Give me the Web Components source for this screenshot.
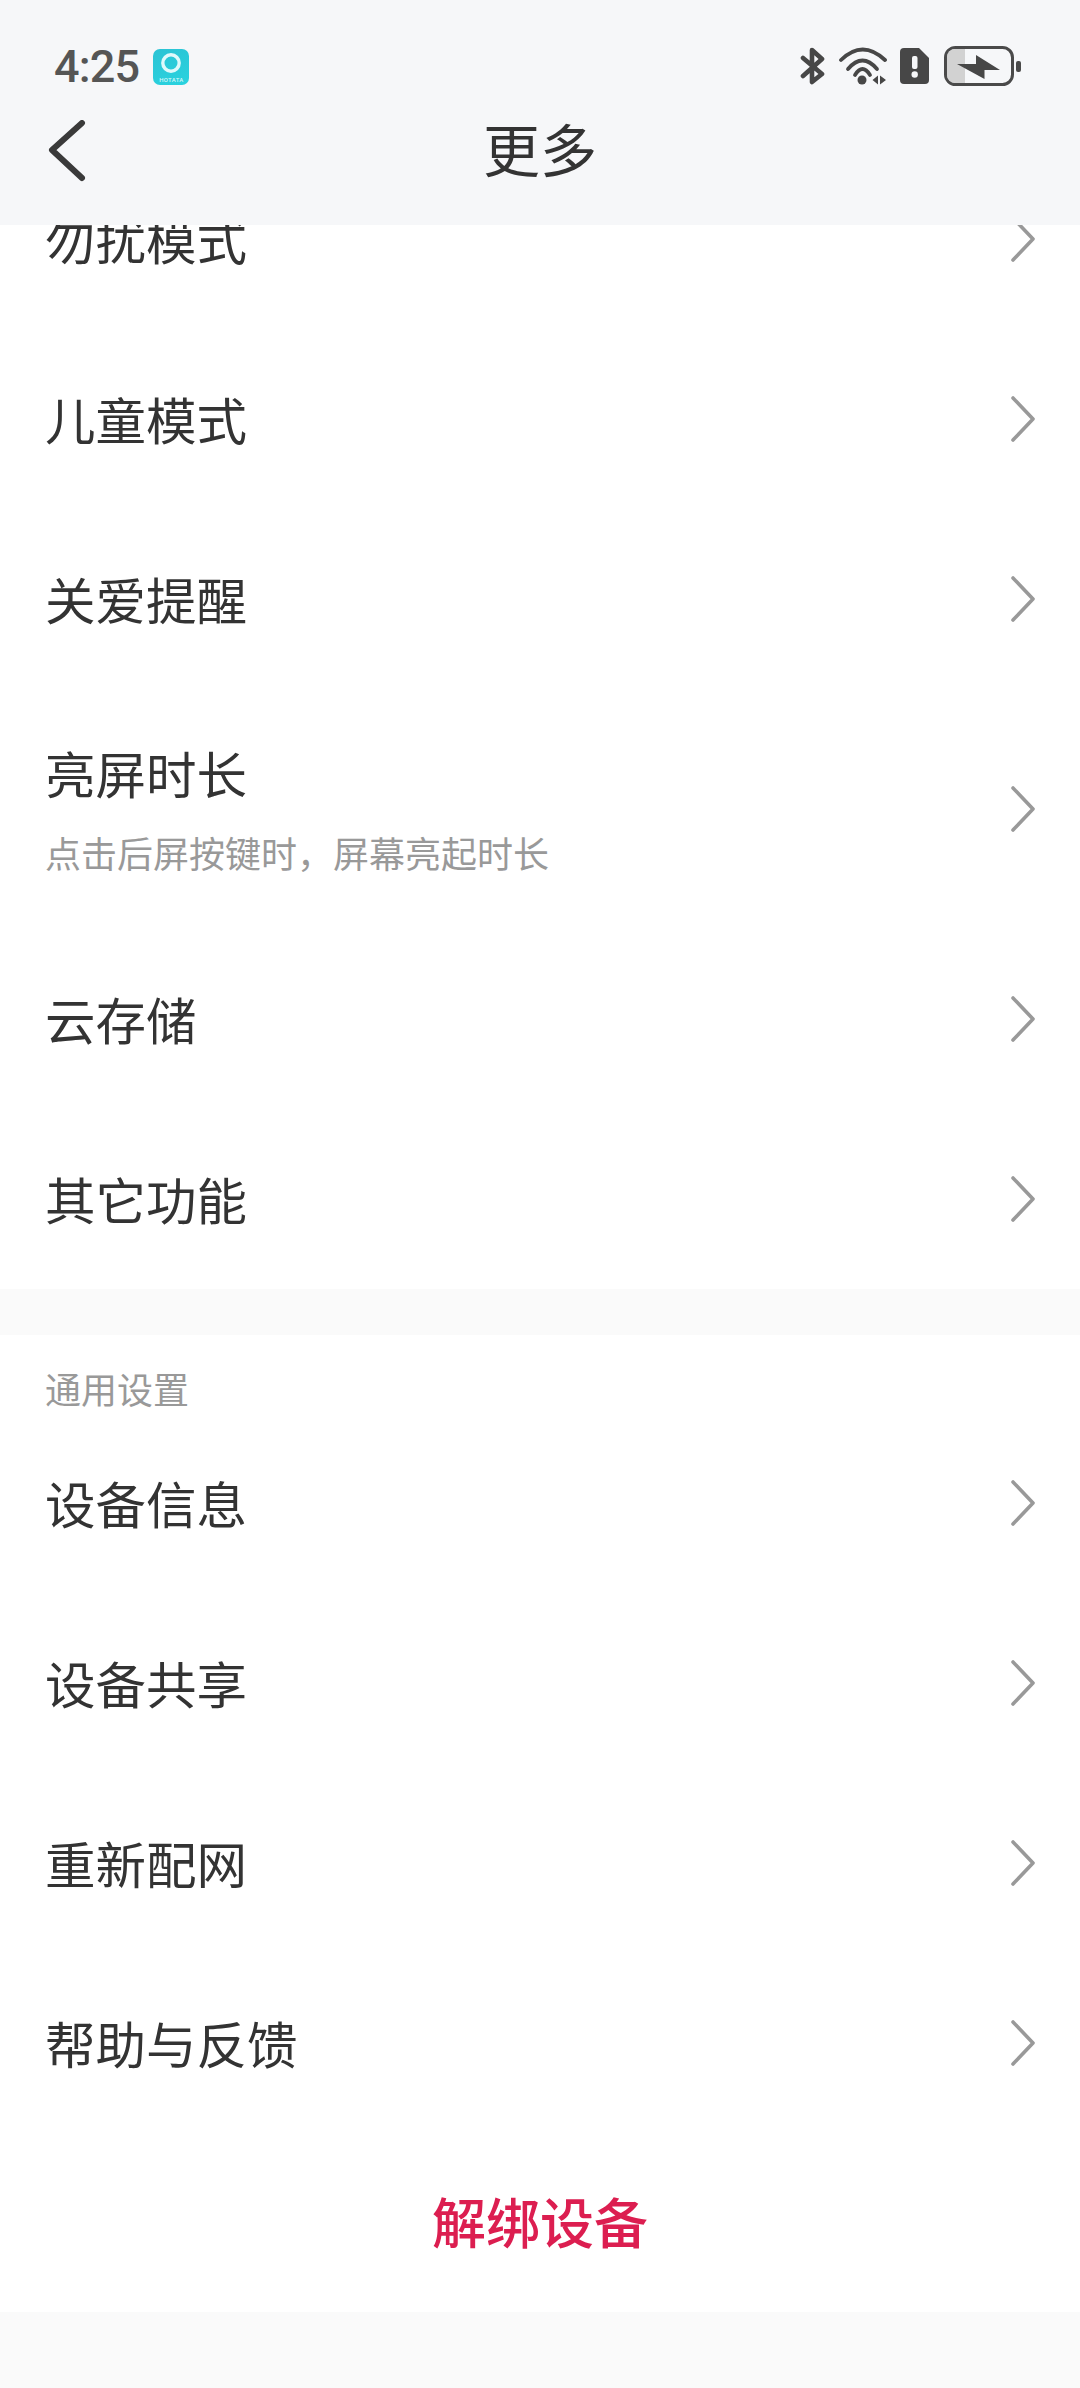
<!DOCTYPE html>
<html lang="zh-CN"><head><meta charset="utf-8"><title>更多</title>
<style>
html,body{margin:0;padding:0;background:#fafafa}
body{width:1080px;height:2388px;overflow:hidden;font-family:"Noto Sans CJK SC","Noto Sans",sans-serif;color:#333}
</style></head><body>
<more-page></more-page>
<template id="t-status">
<style>
:host{display:flex;align-items:center;justify-content:space-between;box-sizing:border-box;height:100px;padding:46px 59px 14px 54px;color:#4a4a4a}
.l,.r{display:flex;align-items:center;height:40px}
.time{font:500 45px/40px Roboto,sans-serif;color:#555;letter-spacing:-.8px;position:relative;top:1px}
.logo{box-sizing:border-box;width:36px;height:36px;margin-left:14px;border-radius:7px;background:linear-gradient(160deg,#2bc3d4,#2ad3df);display:flex;flex-direction:column;align-items:center;overflow:hidden;position:relative;top:1px}
.logo svg{margin-top:3px;flex:none}
.logo span{font:500 6px/6px Roboto,sans-serif;color:#d4f7fa;letter-spacing:.3px;margin-top:3px;white-space:nowrap}
svg{display:block}
</style>
<div class="l"><span class="time">4:25</span><div class="logo"><svg width="22" height="22" viewBox="0 0 22 22"><circle cx="11" cy="11" r="8.2" fill="none" stroke="#dff9fb" stroke-width="3.400"/></svg><span>HOTATA</span></div></div>
<div class="r">
<svg width="25" height="38" viewBox="0 0 25 38" style="margin-right:13px"><path d="M3 11 22 27 12 35V3L22 12 3 29" fill="none" stroke="#474747" stroke-width="4.600" stroke-linejoin="round" stroke-linecap="round"/></svg>
<svg width="50" height="38" viewBox="0 0 50 38" style="margin-right:12px"><g fill="none" stroke="#474747" stroke-width="3.800" stroke-linecap="round"><path d="M3 13Q24.500-8 47 13"/><path d="M10 22Q24.500 5 39 22"/><path d="M17 28Q24.500 16 32 28"/></g><circle cx="24" cy="33" r="4.500" fill="#474747"/><path d="M34.500 33l5.500-4.500v9zM42 28.500l6 4.500-6 4.500z" fill="#474747"/></svg>
<svg width="29" height="36" viewBox="0 0 29 36" style="margin-right:14px"><path d="M4 0H19L29 10V32A4 4 0 0 1 25 36H4A4 4 0 0 1 0 32V4A4 4 0 0 1 4 0Z" fill="#474747"/><rect x="12" y="8" width="5.500" height="13" rx="2" fill="#f6f7f9"/><circle cx="14.700" cy="26.500" r="3.200" fill="#f6f7f9"/></svg>
<svg width="78" height="40" viewBox="0 0 78 40"><rect x="2.500" y="1.500" width="67" height="37" rx="10" fill="#f6f7f9" stroke="#4a4a4a" stroke-width="3"/><path d="M4 11a8 8 0 0 1 8-8H22V37H12a8 8 0 0 1-8-8Z" fill="#d2d2d2"/><path d="M14 18H33V9L57 24H41.500V33Z" fill="#474747"/><rect x="73" y="15" width="5" height="11" rx="2" fill="#4a4a4a"/></svg>
</div>
</template>
<template id="t-nav">
<style>
:host{display:grid;grid-template-columns:1fr auto 1fr;align-items:center;box-sizing:border-box;height:125px;padding:0 47px 32px}
h1{margin:0;font:400 57px/70px "Noto Sans CJK SC",sans-serif;color:#333}
svg{display:block;margin-top:8px}
</style>
<svg width="40" height="62" viewBox="0 0 40 62"><path d="M35 3 5 30 35 58" fill="none" stroke="#3a3a3a" stroke-width="6" stroke-linecap="round" stroke-linejoin="round"/></svg>
<h1><slot></slot></h1><span></span>
</template>
<template id="t-row">
<style>
:host{display:flex;align-items:center;justify-content:space-between;box-sizing:border-box;height:180px;padding:0 44px 0 45px;background:#fff}
:host([tall]){height:240px}
.main{font:400 50.5px/66px "Noto Sans CJK SC",sans-serif;color:#333;margin-bottom:3px}
:host([tall]) .main{margin-bottom:0}
:host([tall]) .text{padding-bottom:3px}
.sub{font:400 36px/48px "Noto Sans CJK SC",sans-serif;color:#999;margin-top:23px}
.sub:empty{display:none}
svg{display:block;flex:none}
</style>
<div class="text"><div class="main"><slot></slot></div><div class="sub"></div></div>
<svg width="26" height="46" viewBox="0 0 26 46"><path d="M3 2 23 23 3 44" fill="none" stroke="#999" stroke-width="3.600" stroke-linecap="round" stroke-linejoin="round"/></svg>
</template>
<template id="t-label">
<style>:host{display:flex;align-items:center;box-sizing:border-box;height:78px;padding:28px 45px 0;background:#fff;font:400 36px/48px "Noto Sans CJK SC",sans-serif;color:#999}</style><slot></slot>
</template>
<template id="t-danger">
<style>:host{display:flex;align-items:center;justify-content:center;box-sizing:border-box;height:179px;padding-bottom:3px;background:#fff;font:500 54px/70px "Noto Sans CJK SC",sans-serif;color:#dc1e50}</style><slot></slot>
</template>
<template id="t-page">
<style>
:host{display:flex;flex-direction:column;height:2388px;overflow:hidden}
.head{position:relative;z-index:2;background:#f6f7f9;height:225px;flex:none}
.body{flex:1;overflow:hidden;background:#fafafa}
.scroll{margin-top:-76px}
.gap{height:46px;background:#fafafa}
</style>
<div class="head"><status-bar></status-bar><nav-bar>更多</nav-bar></div>
<div class="body"><div class="scroll">
<list-row>勿扰模式</list-row>
<list-row>儿童模式</list-row>
<list-row>关爱提醒</list-row>
<list-row tall sub="点击后屏按键时，屏幕亮起时长">亮屏时长</list-row>
<list-row>云存储</list-row>
<list-row>其它功能</list-row>
<div class="gap"></div>
<section-label>通用设置</section-label>
<list-row>设备信息</list-row>
<list-row>设备共享</list-row>
<list-row>重新配网</list-row>
<list-row>帮助与反馈</list-row>
<danger-button>解绑设备</danger-button>
</div></div>
</template>
<script>
const def=(n,t,init)=>customElements.define(n,class extends HTMLElement{constructor(){super();this.attachShadow({mode:'open'}).appendChild(document.getElementById(t).content.cloneNode(true))}connectedCallback(){init&&init(this)}});
def('status-bar','t-status');
def('nav-bar','t-nav');
def('list-row','t-row',e=>{e.shadowRoot.querySelector('.sub').textContent=e.getAttribute('sub')||''});
def('section-label','t-label');
def('danger-button','t-danger');
def('more-page','t-page');
</script>
</body></html>
